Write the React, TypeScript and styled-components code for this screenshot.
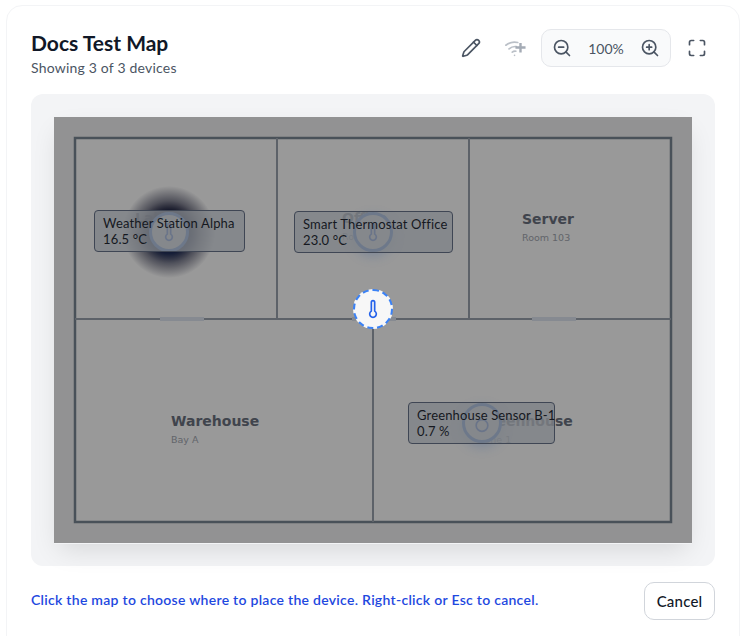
import * as React from 'react';
import styled, { createGlobalStyle } from 'styled-components';
import { Maximize, Pencil, Thermometer, ZoomIn, ZoomOut } from 'lucide-react';

const GlobalStyle = createGlobalStyle`
  html, body {
    margin: 0;
    padding: 0;
    background: #ffffff;
  }

  body {
    font-family: Lato, "Noto Sans", sans-serif;
    color: #111827;
  }
`;

const Page = styled.div`
  width: 746px;
  height: 636px;
  padding: 5px 6px 0;
  box-sizing: border-box;
  overflow: hidden;
`;

const Card = styled.section`
  height: 660px;
  box-sizing: border-box;
  padding: 22px 24px;
  border: 1px solid #f3f4f6;
  border-radius: 16px;
  background: #ffffff;
`;

const Header = styled.header`
  display: flex;
  justify-content: space-between;
  align-items: flex-start;
  height: 66px;
`;

const Title = styled.h2`
  margin: 0;
  font-size: 21px;
  line-height: 30px;
  font-weight: 700;
  color: #111827;
`;

const Subtitle = styled.p`
  margin: 0;
  font-size: 14px;
  line-height: 20px;
  letter-spacing: 0.2px;
  color: #4b5563;
`;

const Tools = styled.div`
  display: flex;
  align-items: center;
  gap: 8px;
  margin-top: 1px;
`;

const IconButton = styled.button<{ $muted?: boolean }>`
  width: 36px;
  height: 36px;
  padding: 0;
  border: 0;
  background: none;
  display: flex;
  align-items: center;
  justify-content: center;
  color: ${(props) => (props.$muted ? '#a4abb5' : '#4b5563')};
`;

const ZoomBox = styled.div`
  display: flex;
  align-items: center;
  justify-content: space-between;
  width: 130px;
  height: 38px;
  padding: 0 2px;
  box-sizing: border-box;
  border: 1px solid #e5e7eb;
  border-radius: 10px;
  background: #f9fafb;
`;

const ZoomLabel = styled.span`
  font-size: 14px;
  color: #4b5563;
`;

const MapFrame = styled.div`
  height: 472px;
  box-sizing: border-box;
  padding: 23px;
  border-radius: 12px;
  background: #f3f4f6;
`;

const MapCanvas = styled.div`
  position: relative;
  width: 638px;
  height: 427px;
  background: #f3f4f6;
  box-shadow: 0 10px 25px -5px rgba(0, 0, 0, 0.12);
  overflow: hidden;
`;

const Dim = styled.div`
  position: absolute;
  inset: 0 0 1px;
  background: rgba(0, 0, 0, 0.4);
`;

const Heat = styled.div`
  position: absolute;
  left: 69px;
  top: 69px;
  width: 92px;
  height: 92px;
  border-radius: 50%;
  background: radial-gradient(
    circle closest-side,
    rgba(18, 20, 50, 0.95) 46%,
    rgba(18, 20, 50, 0.5) 68%,
    rgba(18, 20, 50, 0) 100%
  );
`;

const Pin = styled.div`
  position: absolute;
  width: 40px;
  height: 40px;
  margin: -20px 0 0 -20px;
  box-sizing: border-box;
  border: 3px solid #3b82f6;
  border-radius: 50%;
  background: #ffffff;
  display: flex;
  align-items: center;
  justify-content: center;
  color: #2563eb;
  box-shadow: 0 4px 12px rgba(59, 130, 246, 0.25);
`;

const Tip = styled.div`
  position: absolute;
  box-sizing: border-box;
  height: 42px;
  padding: 4px 8px;
  border: 1px solid #3f4654;
  border-radius: 4px;
  background: rgba(128, 131, 136, 0.8);
  font-size: 13px;
  line-height: 16px;
  letter-spacing: 0.15px;
  color: #15181f;
  white-space: nowrap;
`;

const PlacingPin = styled.div`
  position: absolute;
  left: 299px;
  top: 172px;
  width: 40px;
  height: 40px;
  box-sizing: border-box;
  border: 2px dashed #3b82f6;
  border-radius: 50%;
  background: #f7f7f7;
  display: flex;
  align-items: center;
  justify-content: center;
  color: #2563eb;
`;

const Footer = styled.footer`
  display: flex;
  justify-content: space-between;
  align-items: center;
  margin-top: 16px;
`;

const Hint = styled.p`
  margin: 0;
  padding-bottom: 3px;
  font-size: 14px;
  font-weight: 600;
  letter-spacing: 0.28px;
  color: #1e48e0;
`;

const CancelButton = styled.button`
  width: 71px;
  height: 38px;
  padding: 0;
  border: 1px solid #d1d5db;
  border-radius: 10px;
  background: #ffffff;
  font-family: inherit;
  font-size: 15px;
  font-weight: 500;
  letter-spacing: 0.2px;
  color: #111827;
`;

const rooms = [
  { name: 'Lab', sub: 'Room 101', x: 81, y: 106 },
  { name: 'Office', sub: 'Room 102', x: 288, y: 106 },
  { name: 'Server', sub: 'Room 103', x: 468, y: 107 },
  { name: 'Warehouse', sub: 'Bay A', x: 117, y: 309 },
  { name: 'Greenhouse', sub: 'Zone 1', x: 424, y: 309 },
];

const doors = [106, 298, 478];

const devices = [
  { id: 'a', x: 115, y: 115, name: 'Weather Station Alpha', value: '16.5 °C', left: 40, top: 93, width: 151, bulb: false },
  { id: 'b', x: 319, y: 115, name: 'Smart Thermostat Office', value: '23.0 °C', left: 240, top: 94, width: 159, bulb: false },
  { id: 'c', x: 428, y: 306, name: 'Greenhouse Sensor B-1', value: '0.7 %', left: 354, top: 285, width: 147, bulb: true },
];

function FloorPlan() {
  return (
    <svg width="638" height="426" viewBox="0 0 638 426" style={{ display: 'block' }}>
      <rect x="21" y="21" width="596" height="384" fill="#ffffff" stroke="#7b8794" strokeWidth="2.5" />
      <path d="M21 202H617M223 21V202M415 21V202M319 202V405" fill="none" stroke="#9ca3af" strokeWidth="2" />
      {doors.map((x) => (
        <rect key={x} x={x} y="200" width="44" height="4" fill="#dfe6f2" />
      ))}
      {rooms.map((room) => (
        <g key={room.name} fontFamily="DejaVu Sans, sans-serif">
          <text x={room.x} y={room.y} fontSize="14" fontWeight="700" fill="#6b7280">
            {room.name}
          </text>
          <text x={room.x} y={room.y + 17} fontSize="9.500" fill="#a4a9b2">
            {room.sub}
          </text>
        </g>
      ))}
    </svg>
  );
}

function WifiPlus() {
  return (
    <svg width="22" height="22" viewBox="0 0 24 24" fill="none" stroke="currentColor" strokeLinecap="round">
      <g strokeWidth="1.800" opacity="0.75">
        <path d="M2 9a15 15 0 0 1 13-3" />
        <path d="M5.500 13a10 10 0 0 1 8-2.500" />
        <path d="M9 16.500a5 5 0 0 1 4-1" />
        <path d="M11.500 20h.01" />
      </g>
      <path d="M18 6.500v10.500M12.500 11.500h11" strokeWidth="2.600" strokeLinecap="butt" />
    </svg>
  );
}

function BulbIcon() {
  return (
    <svg width="20" height="20" viewBox="0 0 24 24" fill="none" stroke="currentColor" strokeWidth="2">
      <circle cx="12" cy="15" r="7" />
    </svg>
  );
}

export default function App() {
  return (
    <>
      <GlobalStyle />
      <Page>
        <Card>
          <Header>
            <div>
              <Title>Docs Test Map</Title>
              <Subtitle>Showing 3 of 3 devices</Subtitle>
            </div>
            <Tools>
              <IconButton>
                <Pencil size={20} />
              </IconButton>
              <IconButton $muted>
                <WifiPlus />
              </IconButton>
              <ZoomBox>
                <IconButton>
                  <ZoomOut size={20} />
                </IconButton>
                <ZoomLabel>100%</ZoomLabel>
                <IconButton>
                  <ZoomIn size={20} />
                </IconButton>
              </ZoomBox>
              <IconButton>
                <Maximize size={20} />
              </IconButton>
            </Tools>
          </Header>
          <MapFrame>
            <MapCanvas>
              <FloorPlan />
              <Heat />
              {devices.map((device) => (
                <Pin key={device.id} style={{ left: device.x, top: device.y }}>
                  {device.bulb ? <BulbIcon /> : <Thermometer size={20} />}
                </Pin>
              ))}
              <Dim />
              {devices.map((device) => (
                <Tip key={device.id} style={{ left: device.left, top: device.top, width: device.width }}>
                  {device.name}
                  <br />
                  {device.value}
                </Tip>
              ))}
              <PlacingPin>
                <Thermometer size={20} />
              </PlacingPin>
            </MapCanvas>
          </MapFrame>
          <Footer>
            <Hint>Click the map to choose where to place the device. Right-click or Esc to cancel.</Hint>
            <CancelButton>Cancel</CancelButton>
          </Footer>
        </Card>
      </Page>
    </>
  );
}
